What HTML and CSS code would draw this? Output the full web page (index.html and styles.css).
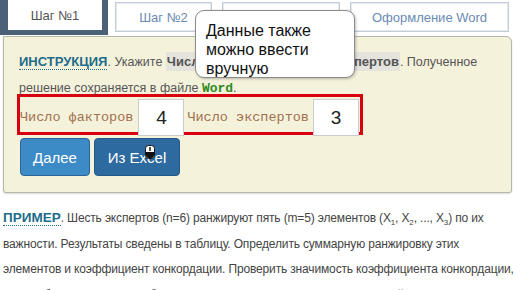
FILE: index.html
```html
<!DOCTYPE html>
<html lang="ru">
<head>
    <meta charset="UTF-8">
    <meta name="viewport" content="width=device-width, initial-scale=1.0">
    <title>Конкордация</title>
    <link rel="stylesheet" href="styles.css">
</head>
<body>
    <div class="tabs">
        <div class="tab active">Шаг №1</div>
        <div class="tab tab-2">Шаг №2</div>
        <div class="tab tab-3">Шаг №3</div>
        <div class="tab tab-4">Оформление Word</div>
    </div>

    <div class="panel">
        <p class="instr">
            <b class="tag">ИНСТРУКЦИЯ</b>. Укажите <span class="hl">Число факторов и Число экспертов</span>. Полученное решение сохраняется в файле <b class="word">Word</b>.
        </p>
        <div class="fields">
            <label class="lbl lbl-1">Число факторов</label>
            <input class="num" type="text" value="4">
            <label class="lbl lbl-2">Число экспертов</label>
            <input class="num" type="text" value="3">
        </div>
        <div class="actions">
            <button class="btn btn-next">Далее</button>
            <button class="btn btn-excel">Из Excel
                <!-- mouse cursor caught in the capture -->
                <svg class="cursor" width="10" height="14" viewBox="0 0 10 14">
                    <rect x="0.5" y="0.5" width="9" height="13" rx="3" fill="#fff" stroke="#111"/>
                    <path d="M1 7 H9 V10 A3 3 0 0 1 6 13 H4 A3 3 0 0 1 1 10 Z" fill="#111"/>
                    <rect x="4.3" y="2" width="1.4" height="4" fill="#111"/>
                </svg>
            </button>
        </div>
    </div>

    <p class="example">
        <b class="tag">ПРИМЕР</b>. Шесть экспертов (n=6) ранжируют пять (m=5) элементов (X<sub>1</sub>, X<sub>2</sub>, ..., X<sub>3</sub>) по их<br>
        важности. Результаты сведены в таблицу. Определить суммарную ранжировку этих<br>
        элементов и коэффициент конкордации. Проверить значимость коэффициента конкордации,<br>
        если табличное значение χ<sup>2</sup><sub>0,01(4)</sub> для 1% уровня значимости и 4 степеней (k = n-1=5-1=4)
    </p>

    <div class="tooltip">Данные также<br>можно ввести<br>вручную</div>
</body>
</html>
```

FILE: styles.css
```css
* {
    margin: 0;
    padding: 0;
    box-sizing: border-box;
}

body {
    font-family: "Liberation Sans", Arial, sans-serif;
    background: #fff;
    color: #444;
    position: relative;
    overflow: hidden;
}

.tabs {
    display: flex;
    align-items: flex-start;
    height: 36px;
}

.tab {
    height: 30px;
    margin-top: 2px;
    border: 1px solid #c3cdd7;
    box-shadow: inset 0 0 0 1px #e4e9ee;
    background: #fff;
    font-size: 13px;
    color: #6a8bb2;
    display: flex;
    align-items: center;
    justify-content: center;
}

.tab.active {
    width: 108px;
    height: 35px;
    margin-top: 0;
    border: none;
    border-left: 8px solid #4a6177;
    border-right: 6px solid #4a6177;
    border-bottom: 5px solid #4a6177;
    box-shadow: none;
    color: #555;
}

.tab-2 {
    width: 97px;
    margin-left: 7px;
}

.tab-3 {
    width: 118px;
    margin-left: 10px;
}

.tab-4 {
    width: 159px;
    margin-left: 10px;
}

.panel {
    margin: 0 4px 0 3px;
    padding: 12px 12px 16px;
    background: #f5f2dc;
    border: 1px solid #b7b6aa;
    border-radius: 0 6px 3px 3px;
    box-shadow: 0 1px 2px rgba(0, 0, 0, 0.15);
}

.instr {
    margin: 0 0 -8px 3px;
    font-size: 12.5px;
    line-height: 26px;
    color: #555;
}

.tag {
    color: #1d6c8b;
    font-size: 13px;
    border-bottom: 1px dotted #1d6c8b;
}

.hl {
    background: #e4e3dc;
    color: #555;
    font-weight: bold;
    font-size: 13px;
    padding: 2px 1px;
}

.word {
    color: #2f8a1f;
    font-family: "Liberation Mono", "Courier New", monospace;
    font-size: 13px;
}

.fields {
    display: flex;
    align-items: flex-start;
    width: 346px;
    height: 41px;
    margin-left: 1px;
    border: 3px solid #d8000e;
}

.lbl {
    font-family: "Liberation Mono", "Courier New", monospace;
    font-size: 13.5px;
    color: #a1704e;
    margin-top: 13px;
}

.lbl-2 {
    margin-left: 3px;
}

.num {
    width: 46px;
    height: 37px;
    margin-top: 2px;
    margin-left: 5px;
    border: 1px solid #ccc;
    background: #fff;
    font-family: "Liberation Sans", Arial, sans-serif;
    font-size: 19px;
    color: #222;
    text-align: center;
    outline: none;
}

.lbl-2 + .num {
    margin-left: 4px;
}

.actions {
    display: flex;
    gap: 4px;
    margin-top: 3px;
    margin-left: 4px;
}

.btn {
    position: relative;
    height: 38px;
    border: 1px solid #2a6496;
    border-radius: 4px;
    color: #fff;
    font-family: "Liberation Sans", Arial, sans-serif;
    font-size: 15px;
}

.btn-next {
    width: 70px;
    background: #3c8ac6;
}

.btn-excel {
    width: 86px;
    background: #2c6aa0;
    border-color: #235a89;
}

.cursor {
    position: absolute;
    left: 50px;
    top: 6px;
}

.example {
    margin: 12px 0 0 3px;
    font-size: 12px;
    letter-spacing: -0.15px;
    line-height: 25.5px;
    color: #444;
    white-space: nowrap;
}

.example .tag {
    font-size: 13.5px;
    letter-spacing: 0;
}

sub, sup {
    font-size: 8px;
    line-height: 0;
}

.tooltip {
    position: absolute;
    left: 195px;
    top: 10px;
    width: 160px;
    height: 68px;
    padding: 10px 0 0 10px;
    background: #fff;
    border: 1px solid #8c8c8c;
    border-radius: 9px;
    box-shadow: 1px 1px 3px rgba(0, 0, 0, 0.25);
    font-size: 16px;
    line-height: 19px;
    color: #111;
}
```
